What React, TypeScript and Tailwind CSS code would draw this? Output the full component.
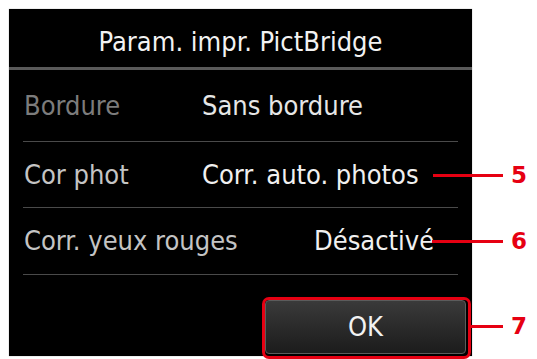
const font = { fontFamily: '"DejaVu Sans Condensed", "DejaVu Sans", sans-serif', fontStretch: 'condensed' }

const Callout = ({ n, top, left }: { n: string; top: number; left: number }) => {
  return (
    <div className="absolute flex items-center" style={{ top: top - 12, left }}>
      <div className="h-[3px] bg-[#e60012]" style={{ width: 503 - left }}></div>
      <div className="w-[8px]"></div>
      <div className="text-[23px] leading-[24px] font-bold text-[#e60012] [font-family:'DejaVu_Sans',sans-serif] [font-stretch:normal]">{n}</div>
    </div>
  )
}

const App = () => {
  return (
    <div className="relative w-[537px] h-[359px] bg-white overflow-hidden" style={font}>
      <div className="ml-[9px] mt-[9px] w-[463px] h-[347px] bg-black flex flex-col shadow-[0_0_1px_#999]">
        {/* header */}
        <div className="h-[61px] border-b-[3px] border-[#5a5a5a] flex justify-center pt-[18px]">
          <div className="text-[27px] leading-[30px] text-[#f2f2f2]">Param. impr. PictBridge</div>
        </div>

        {/* rows */}
        <div className="mx-[14px]">
          <div className="h-[72px] border-b border-[#4a4a4a] flex items-center text-[27px] pt-[2px]">
            <div className="w-[179px] pl-[1px] text-[#7c7c7c]">Bordure</div>
            <div className="text-[#e6e6e6]">Sans bordure</div>
          </div>
          <div className="h-[66px] border-b border-[#4a4a4a] flex items-center text-[27px] pt-[1px]">
            <div className="w-[179px] pl-[1px] text-[#c4c4c4]">Cor phot</div>
            <div className="text-[#f0f0f0]">Corr. auto. photos</div>
          </div>
          <div className="h-[67px] border-b border-[#4a4a4a] flex items-center text-[27px]">
            <div className="w-[291px] pl-[1px] text-[#c4c4c4]">Corr. yeux rouges</div>
            <div className="text-[#f0f0f0]">Désactivé</div>
          </div>
        </div>

        {/* ok button */}
        <div className="flex justify-end pr-[6px] pt-[25px]">
          <div className="w-[201px] h-[54px] rounded-[4px] border border-[#5c5c5c] bg-gradient-to-b from-[#3a3a3a] to-[#1c1c1c] flex items-center justify-center">
            <div className="text-[27px] text-[#f2f2f2]">OK</div>
          </div>
        </div>
      </div>

      {/* annotations */}
      <div className="absolute left-[262px] top-[297px] w-[209px] h-[62px] border-[3px] border-[#e60012] rounded-[7px]"></div>
      <Callout n="5" top={175} left={433} />
      <Callout n="6" top={241} left={432} />
      <Callout n="7" top={326} left={471} />
    </div>
  )
}

export default App
